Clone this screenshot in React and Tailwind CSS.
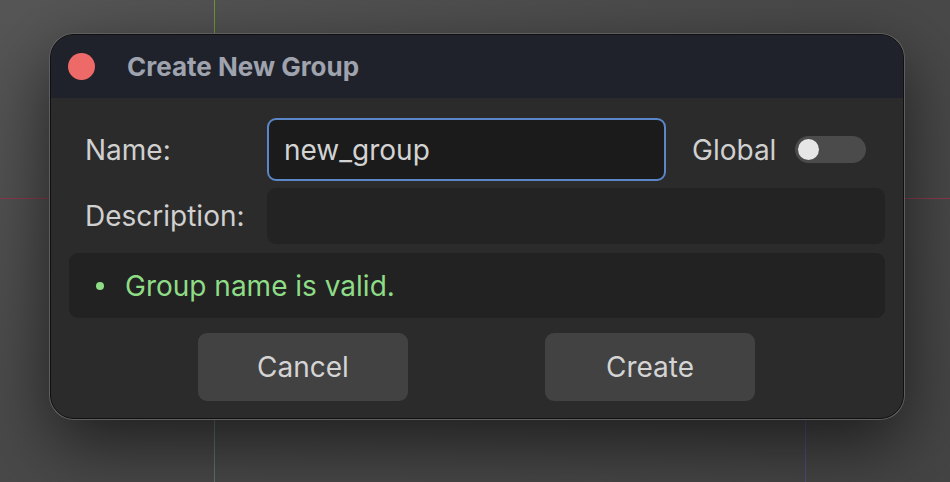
import { useState } from 'react';

export default function App() {
  const [name, setName] = useState('new_group');
  const [description, setDescription] = useState('');
  const [global, setGlobal] = useState(false);

  return (
    <div
      className="relative w-[950px] h-[482px] overflow-hidden bg-[radial-gradient(ellipse_at_top_left,#565656,#4a4a4a_60%,#444444)] pt-[34px] pl-[50px]"
      style={{ fontFamily: 'Inter, "Noto Sans", sans-serif' }}
    >
      {/* canvas axes behind the dialog */}
      <div className="absolute left-[214px] top-0 h-[40px] w-px bg-[#6f9a2f]" />
      <div className="absolute left-[214px] top-[415px] bottom-0 w-px bg-[#5e746f]" />
      <div className="absolute left-[805px] top-[415px] bottom-0 w-px bg-[#4d4d82]" />
      <div className="absolute left-0 right-0 top-[198px] h-px bg-[#8b3b4a]" />

      {/* Dialog */}
      <div className="relative w-[854px] h-[385px] rounded-[24px] border border-[#101010] ring-1 ring-[#5f5f5f] bg-[#2b2b2b] overflow-hidden shadow-[0_24px_70px_rgba(0,0,0,0.6)] flex flex-col">
        {/* Title bar */}
        <div className="h-[63px] bg-[#1f222b] flex items-center pl-[17px] shrink-0">
          <span className="w-[27px] h-[27px] rounded-full bg-[#ed6a68]" />
          <h2 className="ml-[32px] text-[26px] font-bold text-[#9fa3ae]">Create New Group</h2>
        </div>

        <div className="flex flex-col px-[18px] pt-[20px]">
          {/* Name row */}
          <div className="flex items-center">
            <label className="w-[198px] pl-[16px] text-[28px] text-[#d0d0d0]">Name:</label>
            <input
              value={name}
              onChange={(e) => setName(e.target.value)}
              className="w-[399px] h-[63px] rounded-[9px] border-2 border-[#5b86c8] bg-[#1b1b1b] px-[15px] text-[28px] text-[#d3d3d3] outline-none"
            />
            <span className="ml-[26px] text-[28px] text-[#d0d0d0]">Global</span>
            <button
              onClick={() => setGlobal(!global)}
              className="ml-[19px] w-[71px] h-[27px] rounded-full bg-[#4b4b4b] flex items-center px-[3px]"
            >
              <span className={`w-[21px] h-[21px] rounded-full bg-[#e6e6e6] ${global ? 'ml-auto' : ''}`} />
            </button>
          </div>

          {/* Description row */}
          <div className="flex items-center mt-[7px]">
            <label className="w-[198px] pl-[16px] text-[28px] text-[#d0d0d0]">Description:</label>
            <input
              value={description}
              onChange={(e) => setDescription(e.target.value)}
              className="flex-1 h-[56px] rounded-[9px] bg-[#232323] px-[15px] text-[28px] text-[#d3d3d3] outline-none"
            />
          </div>

          {/* Validation */}
          <div className="mt-[9px] h-[65px] rounded-[9px] bg-[#222222] flex items-center pl-[27px]">
            <span className="w-[8px] h-[8px] rounded-full bg-[#8edc86]" />
            <span className="ml-[21px] text-[28px] text-[#8edc86]">Group name is valid.</span>
          </div>

          {/* Buttons */}
          <div className="mt-[15px] flex pl-[129px] gap-[137px]">
            <button className="w-[210px] h-[68px] rounded-[9px] bg-[#424242] text-[28px] text-[#d4d4d4]">Cancel</button>
            <button className="w-[210px] h-[68px] rounded-[9px] bg-[#424242] text-[28px] text-[#d4d4d4]">Create</button>
          </div>
        </div>
      </div>
    </div>
  );
}
